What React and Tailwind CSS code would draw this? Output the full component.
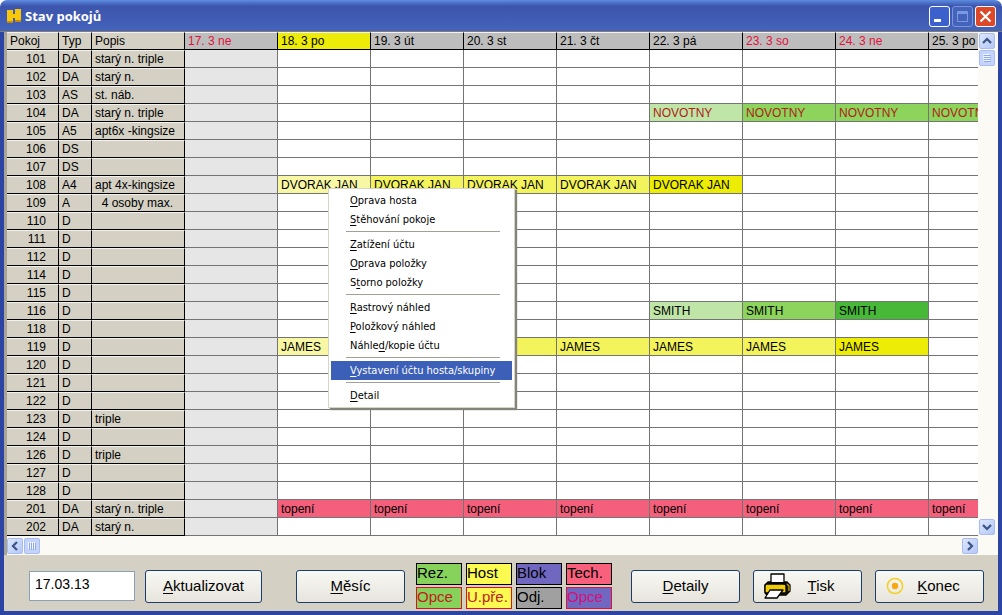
const days = [
  { label: "17. 3 ne", look: "bg-[#bdbdbd] text-[#e0123c]" },
  { label: "18. 3 po", look: "bg-[#ecec08]" },
  { label: "19. 3 út", look: "bg-[#bdbdbd]" },
  { label: "20. 3 st", look: "bg-[#bdbdbd]" },
  { label: "21. 3 čt", look: "bg-[#bdbdbd]" },
  { label: "22. 3 pá", look: "bg-[#bdbdbd]" },
  { label: "23. 3 so", look: "bg-[#bdbdbd] text-[#e0123c]" },
  { label: "24. 3 ne", look: "bg-[#bdbdbd] text-[#e0123c]" },
  { label: "25. 3 po", look: "bg-[#bdbdbd]" },
];

const rooms = [
  ["101", "DA", "starý n. triple"],
  ["102", "DA", "starý n."],
  ["103", "AS", "st. náb."],
  ["104", "DA", "starý n. triple"],
  ["105", "A5", "apt6x -kingsize"],
  ["106", "DS", ""],
  ["107", "DS", ""],
  ["108", "A4", "apt 4x-kingsize"],
  ["109", "A", "\u00a0\u00a04 osoby max."],
  ["110", "D", ""],
  ["111", "D", ""],
  ["112", "D", ""],
  ["114", "D", ""],
  ["115", "D", ""],
  ["116", "D", ""],
  ["118", "D", ""],
  ["119", "D", ""],
  ["120", "D", ""],
  ["121", "D", ""],
  ["122", "D", ""],
  ["123", "D", "triple"],
  ["124", "D", ""],
  ["126", "D", "triple"],
  ["127", "D", ""],
  ["128", "D", ""],
  ["201", "DA", "starý n. triple"],
  ["202", "DA", "starý n."],
];

const tones = {
  guestIn: "bg-[#f8f8a4]",
  guest: "bg-[#f3f35c]",
  guestOut: "bg-[#ecec04]",
  resIn: "bg-[#bfe6a6]",
  res: "bg-[#8cd45c]",
  resOut: "bg-[#48b838]",
  optionIn: "bg-[#bfe6a6] text-[#b0201c]",
  option: "bg-[#8cd45c] text-[#b0201c]",
  tech: "bg-[#f4607c]",
};

// from = index of the first day, one tone per night
const stays = {
  104: { name: "NOVOTNY", from: 5, nights: ["optionIn", "option", "option", "option"] },
  108: { name: "DVORAK JAN", from: 1, nights: ["guestIn", "guest", "guest", "guest", "guestOut"] },
  116: { name: "SMITH", from: 5, nights: ["resIn", "res", "resOut"] },
  119: { name: "JAMES", from: 1, nights: ["guestIn", "guest", "guest", "guest", "guest", "guest", "guestOut"] },
  201: { name: "topení", from: 1, nights: ["tech", "tech", "tech", "tech", "tech", "tech", "tech", "tech"] },
};

// [before, underlined letter, after]
const menu = [
  [["", "O", "prava hosta"], ["", "S", "těhování pokoje"]],
  [["", "Z", "atížení účtu"], ["", "O", "prava položky"], ["S", "t", "orno položky"]],
  [["", "R", "astrový náhled"], ["", "P", "oložkový náhled"], ["Náhle", "d", "/kopie účtu"]],
  [["", "V", "ystavení účtu hosta/skupiny"]],
  [["", "D", "etail"]],
];

const legend = [
  ["Rez.", "bg-[#86d25a] border-black"],
  ["Host", "bg-[#fafa50] border-black"],
  ["Blok", "bg-[#7068c0] border-black"],
  ["Tech.", "bg-[#f8607c] border-black"],
  ["Opce", "bg-[#86d25a] border-[#e01020] text-[#c02020]"],
  ["U.pře.", "bg-[#fafa50] border-[#e01020] text-[#c02020]"],
  ["Odj.", "bg-[#a0a0a0] border-black"],
  ["Opce", "bg-[#7068c0] border-[#e01040] text-[#d4107c]"],
];

const Label = ({ parts }) => (
  <span className="whitespace-nowrap">
    {parts[0]}
    <span className="underline decoration-1 underline-offset-2">{parts[1]}</span>
    {parts[2]}
  </span>
);

const PushButton = ({ parts, width, icon }) => (
  <button
    type="button"
    className={`${width} flex h-[33px] shrink-0 items-center rounded-[3px] border border-[#1c3c6c] bg-linear-to-b from-[#f8f8f4] to-[#e6e4dc] px-[10px] text-[15px]`}
  >
    {icon}
    <span className="flex-1 text-center">
      <Label parts={parts} />
    </span>
  </button>
);

const ScrollButton = ({ label, path }) => (
  <button
    type="button"
    aria-label={label}
    className="flex size-4 shrink-0 items-center justify-center rounded-[2px] border border-[#a8bcf0] bg-linear-to-br from-[#dce6fe] to-[#b4c8f6]"
  >
    <svg width="10" height="10" viewBox="0 0 10 10" fill="none" stroke="#3c5484" strokeWidth="2.2">
      <path d={path} />
    </svg>
  </button>
);

const Thumb = ({ path }) => (
  <div className="flex size-4 shrink-0 items-center justify-center rounded-[2px] border border-[#a8bcf0] bg-[#c4d4fc]">
    <svg width="10" height="10" viewBox="0 0 10 10" stroke="#f4f8fe">
      <path d={path} />
      <path d={path} stroke="#8ca8ec" transform="translate(1 1)" />
    </svg>
  </div>
);

const Printer = () => (
  <svg width="27" height="26" viewBox="0 0 27 26" stroke="#000" strokeWidth="1.3" strokeLinejoin="round">
    <path d="M4 9 H23 L26 12 V18 L22 22 H3 L1 20 V12 Z" fill="#1c1c10" />
    <path d="M3 11 H20 Q22 11 22 13 V19 Q22 20 20 20 H3 Q1 20 1 18 V13 Q1 11 3 11 Z" fill="#f0cc08" />
    <path d="M7 10 V1 H20 V10 Z" fill="#fff" />
    <path d="M5 10 H22" strokeWidth="2" />
    <path d="M23 11 L25 13 V18" fill="none" stroke="#c0a008" />
    <path d="M6 17 H19 L13 25 H1 Z" fill="#fff" />
  </svg>
);

const Target = () => (
  <svg width="18" height="18" viewBox="0 0 18 18">
    <circle cx="9" cy="9" r="7.6" fill="none" stroke="#f4d024" strokeWidth="1.5" />
    <circle cx="9" cy="9" r="3.2" fill="#f8a810" />
  </svg>
);

const TitleBar = () => (
  <header className="flex h-8 items-center gap-1 rounded-t-[7px] border-b border-[#847c70] bg-linear-to-b from-[#5c8ce0] via-[#3c54ac] via-20% to-[#4464bc] pt-[2px] pr-[6px] pl-[7px]">
    <svg width="14" height="15" viewBox="0 0 14 15">
      <path d="M0 1 H6 V5 H8 V0 H14 V13 H8 V9 H6 V14 H0 Z" fill="#f8c808" />
      <path d="M0 12 H6 V14 H0 Z M8 11 H14 V13 H8 Z" fill="#c88c08" />
    </svg>
    <h1 className="flex-1 font-['Open_Sans','Noto_Sans',sans-serif] text-[13px] font-bold text-white">Stav pokojů</h1>
    <div className="flex gap-[2px]">
      <button type="button" aria-label="Minimalizovat" className="size-[21px] rounded-[3px] border border-white bg-[#3c60cc]">
        <svg width="19" height="19" viewBox="0 0 19 19">
          <path d="M4 12 H11 V15 H4 Z" fill="#fff" />
        </svg>
      </button>
      <button type="button" aria-label="Maximalizovat" disabled className="size-[21px] rounded-[3px] border border-[#7c94dc] bg-[#4464bc]">
        <svg width="19" height="19" viewBox="0 0 19 19" fill="none" stroke="#7c98e0">
          <path d="M4.500 4.500 H14.500 V14.500 H4.500 Z M4.500 5.500 H14.500 M4.500 6.500 H14.500" />
        </svg>
      </button>
      <button type="button" aria-label="Zavřít" className="size-[21px] rounded-[3px] border border-white bg-[#dc4828]">
        <svg width="19" height="19" viewBox="0 0 19 19" stroke="#fff" strokeWidth="2.2">
          <path d="M4.500 4.500 L14.500 14.500 M14.500 4.500 L4.500 14.500" />
        </svg>
      </button>
    </div>
  </header>
);

const RoomTable = () => {
  const side = "truncate border-r border-b border-black border-t border-t-[#f4f2ec] bg-[#d4d0c4] p-0 pl-[3px] text-left font-normal";
  return (
    <table className="w-[1015px] table-fixed border-separate border-spacing-0 text-xs leading-4">
      <colgroup>
        <col className="w-[52px]" />
        <col className="w-[33px]" />
        <col className="w-[93px]" />
        {days.map((day) => (
          <col key={day.label} className="w-[93px]" />
        ))}
      </colgroup>
      <thead>
        <tr className="h-[18px]">
          <th className={side}>Pokoj</th>
          <th className={side}>Typ</th>
          <th className={side}>Popis</th>
          {days.map((day) => (
            <th key={day.label} className={`${day.look} border-t border-r border-b border-black border-t-[#f4f2ec] p-0 pl-[3px] text-left font-normal`}>
              {day.label}
            </th>
          ))}
        </tr>
      </thead>
      <tbody>
        {rooms.map(([room, type, note]) => {
          const stay = stays[room];
          return (
            <tr key={room} className="h-[18px]">
              <th scope="row" className="border-t border-r border-b border-black border-t-[#f4f2ec] bg-[#d4d0c4] p-0 pr-3 text-right font-normal">{room}</th>
              <td className={side}>{type}</td>
              <td className={side}>{note}</td>
              {days.map((day, i) => {
                const tone = stay && stay.nights[i - stay.from];
                return (
                  <td
                    key={day.label}
                    className={`overflow-hidden border-r border-b border-[#747474] p-0 pl-[3px] whitespace-nowrap ${tone ? tones[tone] : i === 0 ? "bg-[#e6e6e6]" : "bg-white"}`}
                  >
                    {tone && stay.name}
                  </td>
                );
              })}
            </tr>
          );
        })}
      </tbody>
    </table>
  );
};

const ContextMenu = () => (
  <div role="menu" className="absolute top-[188px] left-[328px] w-[187px] border border-[#d8d4c4] bg-white p-[2px] font-['DejaVu_Sans_Condensed','DejaVu_Sans',sans-serif] text-[11px] shadow-[2px_2px_1px_#84847c]">
    {menu.map((group, g) => (
      <div key={g}>
        {g > 0 && <hr className="mr-3 ml-[15px] my-[2px] h-[2px] border-0 border-t border-[#a0a094]" />}
        {group.map((parts) => (
          <button
            key={parts.join("")}
            type="button"
            role="menuitem"
            className={`flex h-[19px] w-full items-center pt-[2px] pl-[19px] ${parts[1] === "V" ? "bg-[#3c60b8] text-white" : ""}`}
          >
            <Label parts={parts} />
          </button>
        ))}
      </div>
    ))}
  </div>
);

const Toolbar = () => (
  <footer className="flex items-center bg-[#d4d0c4] pt-2 pr-[14px] pb-[2px] pl-[25px]">
    <input
      type="text"
      aria-label="Datum"
      defaultValue="17.03.13"
      className="h-[30px] w-[106px] shrink-0 border border-[#8ca0b8] bg-white px-[5px] pb-1 text-sm"
    />
    <div className="ml-[10px] flex gap-[34px]">
      <PushButton width="w-[117px]" parts={["", "A", "ktualizovat"]} />
      <PushButton width="w-[109px]" parts={["", "M", "ěsíc"]} />
    </div>
    <ul className="ml-[11px] grid shrink-0 grid-cols-4 gap-x-1 gap-y-[2px] text-[15px] leading-[18px]">
      {legend.map(([name, look], i) => (
        <li key={i} className={`${look} h-[22px] w-[46px] border`}>
          {name}
        </li>
      ))}
    </ul>
    <div className="ml-auto flex gap-[13px]">
      <PushButton width="w-[109px]" parts={["", "D", "etaily"]} />
      <PushButton width="w-[109px]" parts={["", "T", "isk"]} icon={<Printer />} />
      <PushButton width="w-[109px]" parts={["", "K", "onec"]} icon={<Target />} />
    </div>
  </footer>
);

const App = () => {
  return (
    <div className="relative overflow-hidden font-['Liberation_Sans',Arial,sans-serif] text-black">
      <TitleBar />
      <main className="border-x-4 border-b-4 border-[#2c44a4] bg-[#d4d0c4]">
        <div className="flex border-l-3 border-[#a8a498] bg-[#fbfaf4] pr-[3px]">
          <div className="min-w-0 flex-1 overflow-hidden">
            <RoomTable />
          </div>
          <div className="flex w-[17px] flex-col gap-px py-px pl-px">
            <ScrollButton label="Nahoru" path="M1 7 L5 3 L9 7" />
            <Thumb path="M1 1.500 H8 M1 3.500 H8 M1 5.500 H8 M1 7.500 H8" />
            <div className="flex-1" />
            <ScrollButton label="Dolů" path="M1 3 L5 7 L9 3" />
          </div>
        </div>
        <div className="flex h-[19px] items-center gap-px border-l-3 border-[#a8a498] bg-[#fbfaf4] pr-5">
          <ScrollButton label="Doleva" path="M7 1 L3 5 L7 9" />
          <Thumb path="M1.500 1 V8 M3.500 1 V8 M5.500 1 V8 M7.500 1 V8" />
          <div className="flex-1" />
          <ScrollButton label="Doprava" path="M3 1 L7 5 L3 9" />
        </div>
        <Toolbar />
      </main>
      <ContextMenu />
    </div>
  );
};

export default App;
